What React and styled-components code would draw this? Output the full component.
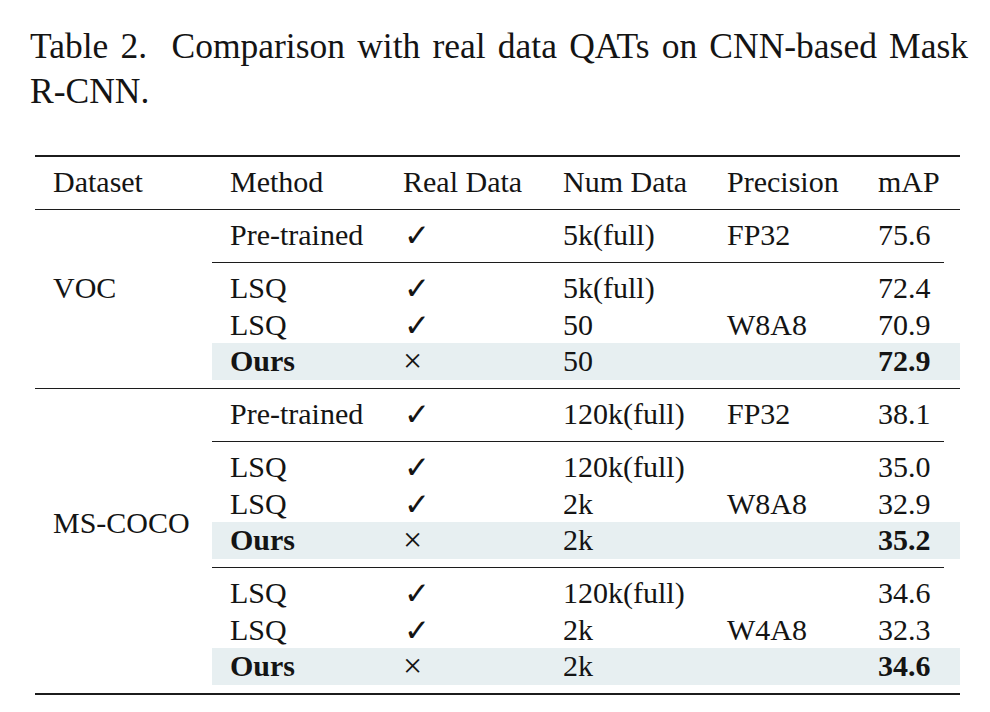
import styled, { createGlobalStyle } from "styled-components";

const GlobalStyle = createGlobalStyle`
  body {
    margin: 0;
    background: #fff;
    color: #141414;
    font-family: "Liberation Serif", "Times New Roman", serif;
  }
`;

const Page = styled.div`
  padding: 24px 22px 0 30px;
`;

const Caption = styled.p`
  margin: 0;
  width: 938px;
  font-size: 35.5px;
  line-height: 45px;
  text-align: justify;
  text-align-last: left;
`;

const NoBreak = styled.span`
  white-space: nowrap;
`;

const Table = styled.div`
  margin: 41px 0 0 5px;
  width: 925px;
  font-size: 30px;
  line-height: 36.5px;
`;

const Rule = styled.div`
  height: ${(p) => (p.$thick ? "2px" : "1px")};
  background: #1c1c1c;
  margin-right: ${(p) => (p.$trim ? "16px" : "0")};
`;

const cols = "173px 160px 164px 151px 1fr";

const HeaderRow = styled.div`
  display: grid;
  grid-template-columns: 177px ${cols};
  padding: 7px 0 8.5px;
`;

const Cell = styled.div`
  padding-left: 18px;
  white-space: nowrap;
  height: 36.5px;
  font-weight: ${(p) => (p.$bold ? 700 : 400)};
`;

const Block = styled.div`
  display: flex;
`;

const DatasetCell = styled.div`
  width: 177px;
  flex-shrink: 0;
  padding: ${(p) => p.$offset}px 0 0 18px;
  box-sizing: border-box;
  white-space: nowrap;
`;

const Groups = styled.div`
  flex: 1;
  display: flex;
  flex-direction: column;
`;

const Group = styled.div`
  padding: 7px 0 8.5px;
`;

const Row = styled.div`
  display: grid;
  grid-template-columns: ${cols};
  background: ${(p) => (p.$ours ? "#e7eff1" : "transparent")};
`;

const Check = styled.span`
  font-family: "DejaVu Sans", sans-serif;
  font-size: 31px;
  margin-left: 1px;
`;

const Cross = styled.span`
  font-size: 34px;
`;

const LSQ = (num, prec, map) => ({ method: "LSQ", real: true, num, prec, map });
const OURS = (num, map) => ({ method: "Ours", real: false, num, prec: "", map, ours: true });
const PRE = (num, map) => ({ method: "Pre-trained", real: true, num, prec: "FP32", map });

const blocks = [
  {
    name: "VOC",
    offset: 60,
    groups: [
      [PRE("5k(full)", "75.6")],
      [LSQ("5k(full)", "", "72.4"), LSQ("50", "W8A8", "70.9"), OURS("50", "72.9")],
    ],
  },
  {
    name: "MS-COCO",
    offset: 116,
    groups: [
      [PRE("120k(full)", "38.1")],
      [LSQ("120k(full)", "", "35.0"), LSQ("2k", "W8A8", "32.9"), OURS("2k", "35.2")],
      [LSQ("120k(full)", "", "34.6"), LSQ("2k", "W4A8", "32.3"), OURS("2k", "34.6")],
    ],
  },
];

const headers = ["Dataset", "Method", "Real Data", "Num Data", "Precision", "mAP"];

const App = () => {
  return (
    <Page>
      <GlobalStyle />
      <Caption>
        Table 2.&nbsp; Comparison with real data QATs on CNN-based Mask{" "}
        <NoBreak>R-CNN.</NoBreak>
      </Caption>
      <Table>
        <Rule $thick />
        <HeaderRow>
          {headers.map((h) => (
            <Cell key={h}>{h}</Cell>
          ))}
        </HeaderRow>
        {blocks.map((b) => (
          <div key={b.name}>
            <Rule />
            <Block>
              <DatasetCell $offset={b.offset}>{b.name}</DatasetCell>
              <Groups>
                {b.groups.map((g, gi) => (
                  <div key={gi}>
                    {gi > 0 && <Rule $trim />}
                    <Group>
                      {g.map((r, ri) => (
                        <Row key={ri} $ours={r.ours}>
                          <Cell $bold={r.ours}>{r.method}</Cell>
                          <Cell>{r.real ? <Check>✓</Check> : <Cross>×</Cross>}</Cell>
                          <Cell>{r.num}</Cell>
                          <Cell>{r.prec}</Cell>
                          <Cell $bold={r.ours}>{r.map}</Cell>
                        </Row>
                      ))}
                    </Group>
                  </div>
                ))}
              </Groups>
            </Block>
          </div>
        ))}
        <Rule $thick />
      </Table>
    </Page>
  );
};

export default App;
